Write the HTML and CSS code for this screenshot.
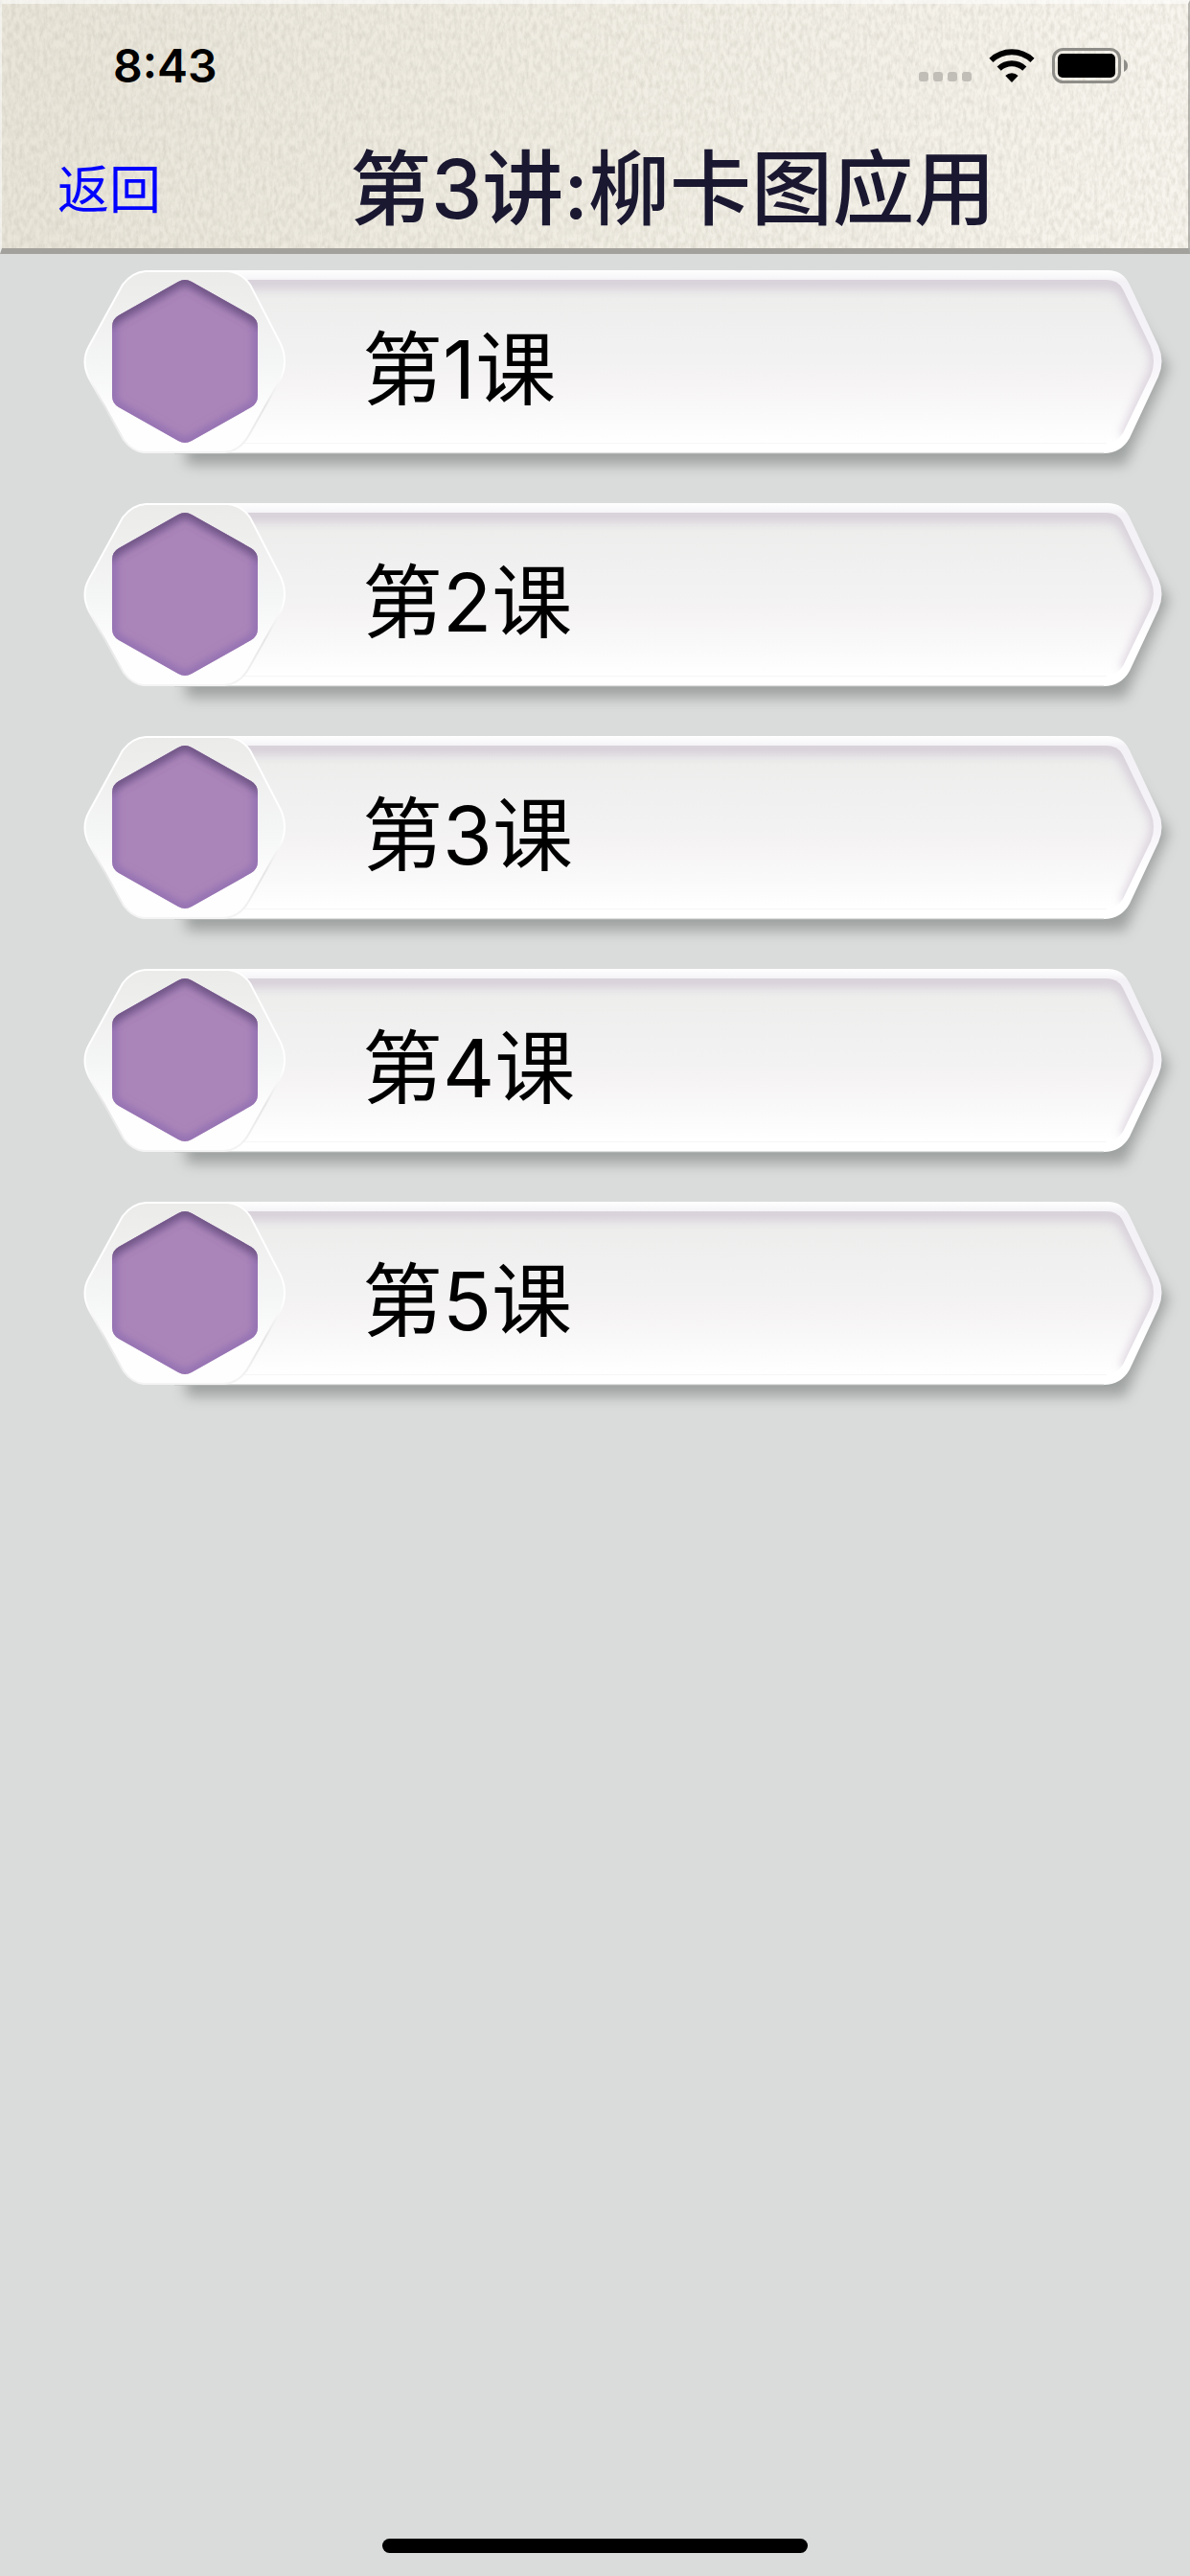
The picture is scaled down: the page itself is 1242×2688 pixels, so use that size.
FILE: index.html
```
<!DOCTYPE html>
<html lang="zh-CN">

<head>
    <meta charset="UTF-8">
    <meta name="viewport" content="width=device-width, initial-scale=1.0">
    <title>第3讲:柳卡图应用</title>
    <link rel="stylesheet" href="styles.css">
</head>

<body>
    <!-- shared shapes for the lesson rows -->
    <svg class="defs" width="0" height="0" aria-hidden="true">
        <defs>
            <linearGradient id="face" x1="0" y1="0" x2="0" y2="1">
                <stop offset="0" stop-color="#ececeb" />
                <stop offset="0.4" stop-color="#f1f1f1" />
                <stop offset="0.6" stop-color="#f5f3f4" />
                <stop offset="1" stop-color="#ffffff" />
            </linearGradient>
            <linearGradient id="rim" x1="0" y1="0" x2="0" y2="1">
                <stop offset="0" stop-color="#ffffff" />
                <stop offset="0.06" stop-color="#f3f1f5" />
                <stop offset="0.5" stop-color="#f6f3f8" />
                <stop offset="0.75" stop-color="#ffffff" />
            </linearGradient>
            <linearGradient id="badge" x1="0" y1="0" x2="0" y2="1">
                <stop offset="0" stop-color="#ebebe9" />
                <stop offset="0.5" stop-color="#f4f5f5" />
                <stop offset="0.8" stop-color="#fefefe" />
            </linearGradient>
            <linearGradient id="edge" x1="0" y1="0" x2="0" y2="1">
                <stop offset="0" stop-color="#ffffff" />
                <stop offset="0.55" stop-color="#ffffff" />
                <stop offset="0.75" stop-color="#e6e6e7" />
                <stop offset="1" stop-color="#f4f4f4" />
            </linearGradient>
            <filter id="soft" x="-20%" y="-20%" width="140%" height="140%">
                <feGaussianBlur stdDeviation="7" />
            </filter>
            <filter id="glow" x="-20%" y="-20%" width="140%" height="140%">
                <feGaussianBlur stdDeviation="5" />
            </filter>
            <clipPath id="face-clip">
                <path d="M190 27H1155Q1167 27 1172 37L1201 97Q1207 112 1201 127L1172 187Q1165 198 1153 198H190Z" />
            </clipPath>
            <clipPath id="gem-clip">
                <path d="M186 29Q193 25 200 29L262 64Q269 68 269 76V148Q269 156 262 160L200 195Q193 199 186 195L124 160Q117 156 117 148V76Q117 68 124 64Z" />
            </clipPath>
            <symbol id="plaque" viewBox="0 0 1242 243">
                <path d="M194 34H1164L1220 118L1174 220H194Z" fill="#858988" opacity="0.7" filter="url(#soft)" />
                <path d="M182 17H1156Q1172 17 1179 32L1209 96Q1216 112 1209 128L1179 192Q1170 208 1152 208H182Z" fill="url(#rim)" />
                <path d="M182 208H1152" stroke="#bfc1c1" />
                <g clip-path="url(#face-clip)">
                    <path d="M180 27H1210V198H180Z" fill="url(#face)" />
                    <path d="M180 29H1155Q1168 29 1175 39L1205 97Q1211 112 1205 127L1176 192" fill="none" stroke="#c9bdce" stroke-width="16" opacity="0.6" filter="url(#glow)" />
                    <path d="M180 198H1155" stroke="#f6f6f6" stroke-width="2" />
                </g>
                <path d="M152 18H238Q253 20 261 32L293 94Q301 112 293 130L261 187Q251 206 234 207H150Q138 206 129 194L93 130Q84 112 93 96L128 32Q138 19 152 18Z" fill="url(#badge)" stroke="url(#edge)" stroke-width="2" />
                <g clip-path="url(#gem-clip)">
                    <path d="M110 20H276V204H110Z" fill="#aa85b9" />
                    <path d="M186 29Q193 25 200 29L262 64Q269 68 269 76V148Q269 156 262 160L200 195Q193 199 186 195L124 160Q117 156 117 148V76Q117 68 124 64Z" fill="none" stroke="#8c6bb0" stroke-width="8" filter="url(#glow)" />
                    <path d="M110 72L124 62L186 27Q193 23 200 27L262 62L276 72" fill="none" stroke="#6d5280" stroke-width="13" filter="url(#glow)" />
                </g>
            </symbol>
        </defs>
    </svg>

    <header class="header">
        <div class="status-bar">
            <div class="time">8:43</div>
            <div class="status-icons">
                <div class="dots"><i></i><i></i><i></i><i></i></div>
                <svg class="wifi" width="48" height="36" viewBox="0 0 48 36" aria-hidden="true">
                    <g fill="none" stroke="#000" stroke-width="6">
                        <path d="M2.5 12.8A31 31 0 0 1 45.5 12.8" />
                        <path d="M10.700 21.700A19.200 19.200 0 0 1 37.300 21.700" />
                    </g>
                    <path d="M24 36L17.300 29A9.500 9.500 0 0 1 30.700 29Z" />
                </svg>
                <svg class="battery" width="80" height="37" viewBox="0 0 80 37" aria-hidden="true">
                    <rect x="1.500" y="1.500" width="69" height="34" rx="10" fill="none" stroke="#8f8d88" stroke-width="3" />
                    <rect x="6" y="6" width="60" height="25" rx="5" />
                    <path d="M75 12Q79 14 79 18.500Q79 23 75 25Z" fill="#8f8d88" />
                </svg>
            </div>
        </div>
        <nav class="nav-bar">
            <button class="back" type="button">返回</button>
            <h1 class="title">第3讲:柳卡图应用</h1>
        </nav>
    </header>

    <main class="lessons">
        <a class="lesson" href="#lesson1">
            <svg class="plaque" viewBox="0 0 1242 243" aria-hidden="true"><use href="#plaque" /></svg>
            <span class="lesson-name">第1课</span>
        </a>
        <a class="lesson" href="#lesson2">
            <svg class="plaque" viewBox="0 0 1242 243" aria-hidden="true"><use href="#plaque" /></svg>
            <span class="lesson-name">第2课</span>
        </a>
        <a class="lesson" href="#lesson3">
            <svg class="plaque" viewBox="0 0 1242 243" aria-hidden="true"><use href="#plaque" /></svg>
            <span class="lesson-name">第3课</span>
        </a>
        <a class="lesson" href="#lesson4">
            <svg class="plaque" viewBox="0 0 1242 243" aria-hidden="true"><use href="#plaque" /></svg>
            <span class="lesson-name">第4课</span>
        </a>
        <a class="lesson" href="#lesson5">
            <svg class="plaque" viewBox="0 0 1242 243" aria-hidden="true"><use href="#plaque" /></svg>
            <span class="lesson-name">第5课</span>
        </a>
    </main>

    <footer class="home">
        <div class="home-indicator"></div>
    </footer>
</body>

</html>
```
FILE: styles.css
```
* {
    box-sizing: border-box;
}

body {
    display: flex;
    flex-direction: column;
    min-height: 100vh;
    margin: 0;
    background-color: #dadcdb;
    color: #000;
    font-family: Inter, "Noto Sans CJK SC", sans-serif;
}

.defs {
    position: absolute;
}

/* linen texture over a left to right gradient */
.header {
    height: 265px;
    border-style: solid;
    border-width: 4px 2px 6px;
    border-color: rgba(255, 255, 255, 0.6) rgba(120, 120, 115, 0.5) #a3a19b rgba(255, 255, 255, 0.5);
    background-image:
        url("data:image/svg+xml,%3Csvg xmlns='http://www.w3.org/2000/svg' width='270' height='270'%3E%3Cfilter id='a' x='0' y='0' width='1' height='1'%3E%3CfeTurbulence type='fractalNoise' baseFrequency='.24 .12' numOctaves='3' seed='4' stitchTiles='stitch'/%3E%3CfeColorMatrix values='0 0 0 0 .45 0 0 0 0 .43 0 0 0 0 .36 .55 0 0 0 -.18'/%3E%3C/filter%3E%3Crect width='270' height='270' filter='url(%23a)'/%3E%3C/svg%3E"),
        linear-gradient(to right, #e9e5d9, #f8f5ee);
    background-origin: border-box;
}

.status-bar {
    display: flex;
    justify-content: space-between;
    align-items: center;
    height: 128px;
    padding: 0 62px 0 116px;
}

.time {
    font-size: 48px;
    font-weight: 600;
}

.status-icons {
    display: flex;
    align-items: center;
    gap: 18px;
}

.dots {
    display: flex;
    align-self: flex-end;
    gap: 5px;
    padding-bottom: 2px;
}

.dots i {
    width: 10px;
    height: 10px;
    border-radius: 3px;
    background-color: #c1beb8;
}

.nav-bar {
    display: flex;
    align-items: center;
    height: 128px;
    padding-left: 58px;
}

.back {
    width: 305px;
    padding: 0 0 4px;
    border: none;
    background: none;
    color: #0000ff;
    font-family: inherit;
    font-size: 54px;
    text-align: left;
    cursor: pointer;
}

.title {
    margin: 0;
    padding-top: 4px;
    color: #1a1830;
    font-size: 85px;
    font-weight: 500;
    line-height: 128px;
    white-space: nowrap;
}

.lessons {
    flex: 1;
}

.lesson {
    display: grid;
    align-items: center;
    color: #000;
    text-decoration: none;
}

.plaque,
.lesson-name {
    grid-area: 1 / 1;
}

.plaque {
    display: block;
    width: 100%;
}

.lesson-name {
    padding: 0 0 2px 378px;
    font-size: 84px;
    line-height: 120px;
}

.home {
    display: flex;
    justify-content: center;
    padding-bottom: 24px;
}

.home-indicator {
    width: 444px;
    height: 15px;
    border-radius: 8px;
    background-color: #000;
}
```
